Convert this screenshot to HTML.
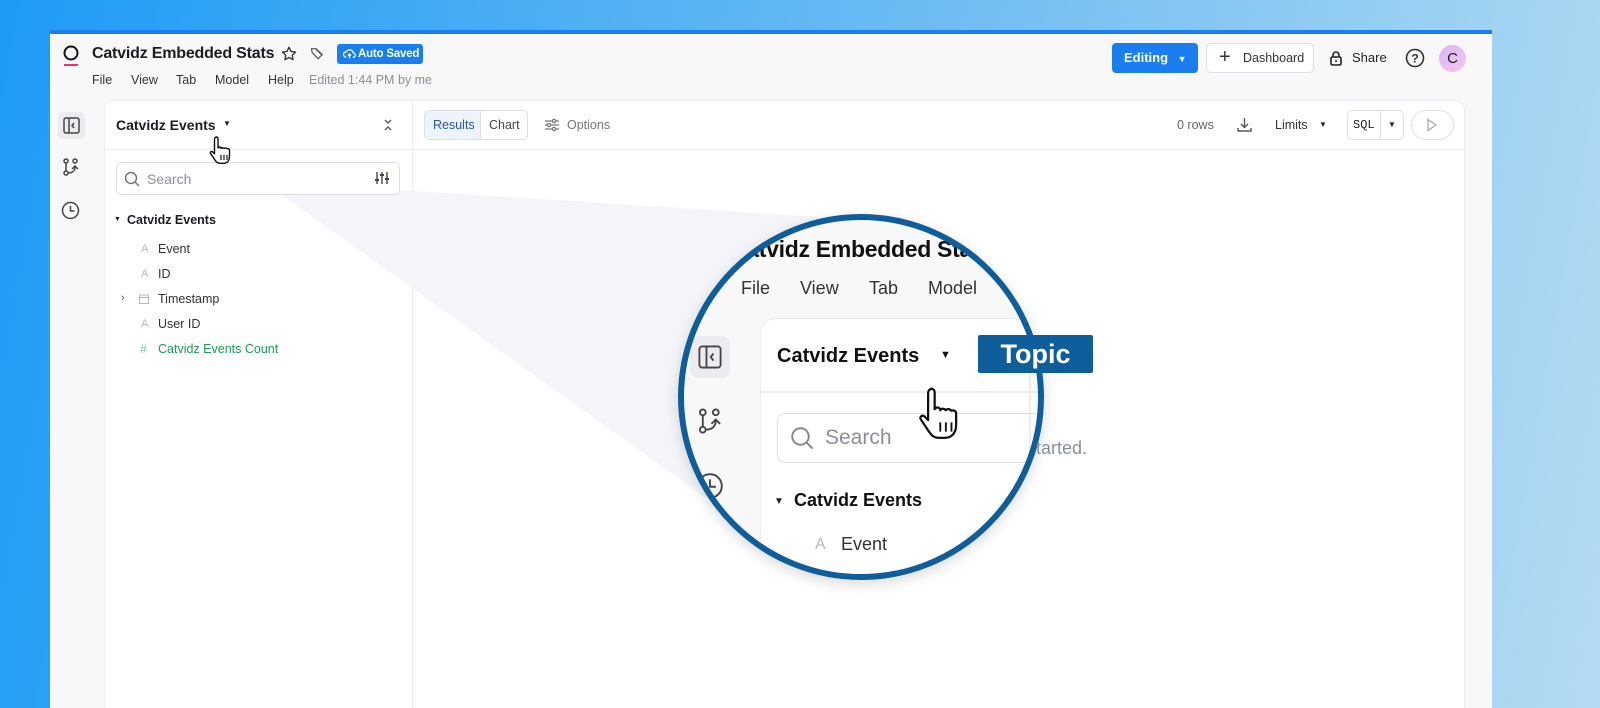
<!DOCTYPE html>
<html><head><meta charset="utf-8"><style>
*{box-sizing:border-box;margin:0;padding:0}
html,body{width:1600px;height:708px;overflow:hidden}
body{position:relative;font-family:"Liberation Sans",sans-serif;background:linear-gradient(100deg,#1d9bf5 0%,#5fb6f3 45%,#b4dbf2 100%);}
#wrap{position:absolute;left:0;top:0;width:1600px;height:708px;overflow:hidden;background:linear-gradient(100deg,#1d9bf5 0%,#5fb6f3 45%,#b4dbf2 100%)}
.abs{position:absolute}
.win{left:50px;top:30px;width:1442px;height:678px;background:#f8f8f9;border-top:4px solid #1a7ef0;}
.t{position:absolute;white-space:nowrap}
.panel{left:104px;top:100px;width:1361px;height:620px;background:#fff;border:1px solid #ececf0;border-radius:10px;}
.btn{position:absolute;border:1px solid #dcdfe5;border-radius:5px;background:#fff}
</style></head><body><div id="wrap">
<div class="abs win"></div>
<!-- header -->
<svg class="abs" style="left:62px;top:44px" width="20" height="24"><circle cx="9" cy="9" r="6.5" fill="none" stroke="#111" stroke-width="2"/><rect x="2" y="20" width="14" height="2" fill="#e8336b"/></svg>
<div class="t" style="left:92px;top:45px;font-size:16px;font-weight:bold;color:#1b1d22;letter-spacing:-0.2px">Catvidz Embedded Stats</div>
<svg class="abs" style="left:280px;top:45px" width="18" height="18" viewBox="0 0 24 24"><path d="M12 3l2.7 5.6 6.1.8-4.5 4.2 1.1 6L12 16.7 6.6 19.6l1.1-6L3.2 9.4l6.1-.8z" fill="none" stroke="#333" stroke-width="1.8" stroke-linejoin="round"/></svg>
<svg class="abs" style="left:309px;top:46px" width="17" height="16" viewBox="0 0 24 24"><path d="M3 4h7l9 9-6 6-9-9z M9 4l9 9" fill="none" stroke="#555" stroke-width="1.8"/></svg>
<div class="abs" style="left:337px;top:44px;width:86px;height:20px;background:#1a7ef0;border-radius:3px;color:#fff;font-size:11.5px;font-weight:bold;line-height:20px;padding-left:21px;white-space:nowrap;letter-spacing:-0.2px">Auto Saved</div>
<svg class="abs" style="left:343px;top:48px" width="13" height="12" viewBox="0 0 24 22"><path d="M6 17a5 5 0 010-10 7 7 0 0113 2 4 4 0 01-1 8M12 19v-8m-3 3l3-3 3 3" fill="none" stroke="#fff" stroke-width="2.4"/></svg>
<div class="t" style="left:92px;top:73px;font-size:12.5px;color:#333">File</div>
<div class="t" style="left:131px;top:73px;font-size:12.5px;color:#333">View</div>
<div class="t" style="left:176px;top:73px;font-size:12.5px;color:#333">Tab</div>
<div class="t" style="left:215px;top:73px;font-size:12.5px;color:#333">Model</div>
<div class="t" style="left:268px;top:73px;font-size:12.5px;color:#333">Help</div>
<div class="t" style="left:309px;top:73px;font-size:12.5px;color:#8a8f98">Edited 1:44 PM by me</div>

<div class="abs" style="left:1112px;top:43px;width:86px;height:30px;background:#1a7ef0;border-radius:4px;color:#fff;font-size:13px;font-weight:bold;line-height:30px;padding-left:12px;white-space:nowrap">Editing <span style="font-size:9px;margin-left:6px">▼</span></div>
<div class="btn" style="left:1206px;top:43px;width:108px;height:30px;font-size:12.5px;color:#333;line-height:28px;padding-left:36px">Dashboard</div>
<div class="t" style="left:1219px;top:46px;font-size:20px;color:#333;font-weight:300">+</div>
<svg class="abs" style="left:1329px;top:50px" width="14" height="16" viewBox="0 0 14 16"><rect x="2" y="7" width="10" height="8" rx="1.5" fill="none" stroke="#222" stroke-width="1.6"/><path d="M4 7V5a3 3 0 016 0v2" fill="none" stroke="#222" stroke-width="1.6"/><circle cx="7" cy="11" r="1" fill="#222"/></svg>
<div class="t" style="left:1352px;top:50px;font-size:13px;color:#222">Share</div>
<svg class="abs" style="left:1405px;top:48px" width="20" height="20"><circle cx="10" cy="10" r="8.5" fill="none" stroke="#333" stroke-width="1.6"/><text x="10" y="14.5" font-size="12" font-weight="bold" text-anchor="middle" fill="#333" font-family="Liberation Sans">?</text></svg>
<div class="abs" style="left:1439px;top:45px;width:27px;height:27px;border-radius:50%;background:linear-gradient(135deg,#d9b6f5,#f5c8ea);font-size:15px;line-height:27px;text-align:center;color:#222">C</div>

<!-- left rail -->
<div class="abs" style="left:58px;top:112px;width:27px;height:27px;background:#ececf0;border-radius:5px"></div>
<svg class="abs" style="left:63px;top:117px" width="17" height="17" viewBox="0 0 17 17"><rect x="1" y="1" width="15" height="15" rx="2" fill="none" stroke="#444" stroke-width="1.5"/><path d="M6 1v15M11 6l-2 2.5 2 2.5" fill="none" stroke="#444" stroke-width="1.5"/></svg>
<svg class="abs" style="left:62px;top:158px" width="18" height="18" viewBox="0 0 18 18" fill="none" stroke="#444" stroke-width="1.5"><circle cx="4" cy="3" r="2"/><circle cx="13" cy="3" r="2"/><circle cx="4" cy="15" r="2"/><path d="M4 5v8M6 15c4 0 7-2 7-6M10 11l3-3 3 3"/></svg>
<svg class="abs" style="left:61px;top:201px" width="19" height="19" viewBox="0 0 19 19" fill="none" stroke="#444" stroke-width="1.5"><circle cx="9.5" cy="9.5" r="8"/><path d="M9.5 5v5h4"/></svg>

<div class="abs panel"></div>
<div class="abs" style="left:412px;top:101px;width:1px;height:607px;background:#ececf0"></div>
<div class="abs" style="left:105px;top:149px;width:1359px;height:1px;background:#ececf0"></div>

<!-- cone -->
<svg class="abs" style="left:0;top:0" width="1600" height="708"><polygon points="265,183 400,190 836,218 706,498" fill="#f4f5f8"/></svg>

<!-- sidebar -->
<div class="t" style="left:116px;top:117px;font-size:14px;font-weight:bold;color:#1b1d22">Catvidz Events</div>
<div class="t" style="left:223px;top:119px;font-size:8px;color:#222">▼</div>
<svg class="abs" style="left:383px;top:118px" width="10" height="14" fill="none" stroke="#555" stroke-width="1.3"><path d="M2 2l3 3 3-3M2 12l3-3 3 3"/></svg>
<div class="abs" style="left:116px;top:162px;width:284px;height:33px;border:1px solid #dcdfe5;border-radius:5px;background:#fff"></div>
<svg class="abs" style="left:124px;top:171px" width="16" height="16" viewBox="0 0 16 16" fill="none" stroke="#777" stroke-width="1.5"><circle cx="7" cy="7" r="5.5"/><path d="M11 11l4 4"/></svg>
<div class="t" style="left:147px;top:171px;font-size:14px;color:#8a8f98">Search</div>
<svg class="abs" style="left:375px;top:171px" width="14" height="14" viewBox="0 0 14 14" stroke="#444" stroke-width="1.4"><path d="M2 1v12M7 1v12M12 1v12"/><path d="M0 9h4M5 4h4M10 8h4" stroke-width="2"/></svg>
<div class="t" style="left:114px;top:216px;font-size:7px;color:#222">▼</div>
<div class="t" style="left:127px;top:213px;font-size:12.5px;font-weight:bold;color:#1b1d22">Catvidz Events</div>
<div class="t" style="left:141px;top:243px;font-size:11px;color:#b5b8be">A</div><div class="t" style="left:158px;top:242px;font-size:12.5px;color:#333">Event</div>
<div class="t" style="left:141px;top:268px;font-size:11px;color:#b5b8be">A</div><div class="t" style="left:158px;top:267px;font-size:12.5px;color:#333">ID</div>
<div class="t" style="left:121px;top:292px;font-size:11px;color:#555">›</div>
<svg class="abs" style="left:139px;top:294px" width="10" height="10"><rect x="0.5" y="1" width="9" height="8.5" fill="none" stroke="#b5b8be"/><path d="M0 3.5h10" stroke="#b5b8be"/></svg>
<div class="t" style="left:158px;top:292px;font-size:12.5px;color:#333">Timestamp</div>
<div class="t" style="left:141px;top:318px;font-size:11px;color:#b5b8be">A</div><div class="t" style="left:158px;top:317px;font-size:12.5px;color:#333">User ID</div>
<div class="t" style="left:140px;top:342px;font-size:12px;color:#7dc29a">#</div><div class="t" style="left:158px;top:342px;font-size:12.5px;color:#1e9a52">Catvidz Events Count</div>
<!-- small hand cursor -->
<svg class="abs" style="left:209px;top:135px" width="28" height="30" viewBox="0 0 28 30"><path d="M7 2c1.5 0 2 1 2 2v9l1-1c1 0 2 .5 2 1.5 .5-1 2-1 3 0 .5-.8 2-.8 3 .3 1-.5 2.5 0 2.5 1.5v6c0 4-2 7-6 7h-3c-3 0-4-1-6-4l-4-6c-.5-1 .5-2.5 2-1.5l2 2V4c0-1 1-2 2-2z" fill="#fff" stroke="#111" stroke-width="1.4" stroke-linejoin="round"/><path d="M12 20v5M15 20v5M18 20v5" stroke="#111" stroke-width="1.2"/></svg>

<!-- toolbar -->
<div class="btn" style="left:424px;top:110px;width:104px;height:30px"></div>
<div class="abs" style="left:425px;top:111px;width:56px;height:28px;background:#eef4fd;border-right:1px solid #dcdfe5;border-radius:4px 0 0 4px"></div>
<div class="t" style="left:433px;top:118px;font-size:12.5px;color:#2456b8">Results</div>
<div class="t" style="left:489px;top:118px;font-size:12.5px;color:#444">Chart</div>
<svg class="abs" style="left:545px;top:118px" width="14" height="14" viewBox="0 0 14 14" stroke="#777" stroke-width="1.3" fill="#fff"><path d="M0 3h14M0 7h14M0 11h14"/><circle cx="9" cy="3" r="1.6"/><circle cx="4" cy="7" r="1.6"/><circle cx="9" cy="11" r="1.6"/></svg>
<div class="t" style="left:567px;top:118px;font-size:12.5px;color:#777">Options</div>
<div class="t" style="left:1177px;top:118px;font-size:12.5px;color:#666">0 rows</div>
<svg class="abs" style="left:1237px;top:117px" width="15" height="15" viewBox="0 0 15 15" fill="none" stroke="#555" stroke-width="1.4"><path d="M7.5 1v9M4 7l3.5 3.5L11 7M1 11v3h13v-3"/></svg>
<div class="t" style="left:1275px;top:118px;font-size:12.5px;color:#333">Limits</div>
<div class="t" style="left:1319px;top:120px;font-size:8px;color:#222">▼</div>
<div class="btn" style="left:1347px;top:110px;width:57px;height:30px"></div>
<div class="abs" style="left:1380px;top:111px;width:1px;height:28px;background:#dcdfe5"></div>
<div class="t" style="left:1353px;top:118px;font-size:12px;color:#222;font-family:'Liberation Mono',monospace">SQL</div>
<div class="t" style="left:1388px;top:120px;font-size:8px;color:#222">▼</div>
<div class="abs" style="left:1411px;top:110px;width:43px;height:30px;border:1px solid #dcdfe5;border-radius:15px"></div>
<svg class="abs" style="left:1426px;top:118px" width="12" height="14"><path d="M2 1.5l8 5.5-8 5.5z" fill="none" stroke="#aaa" stroke-width="1.3"/></svg>

<!-- magnifier -->
<div class="abs" style="left:678px;top:214px;width:366px;height:366px;border-radius:50%;overflow:hidden;background:#f8f8f9;box-shadow:0 4px 14px rgba(0,0,0,.15)">
  <div style="position:absolute;left:0;top:0;width:366px;height:366px;transform:translate(-678px,-214px)">
    <div class="t" style="left:730px;top:236px;font-size:23px;font-weight:bold;color:#111;letter-spacing:-0.3px">Catvidz Embedded Stats</div>
    <div class="t" style="left:741px;top:278px;font-size:18px;color:#333">File</div>
    <div class="t" style="left:800px;top:278px;font-size:18px;color:#333">View</div>
    <div class="t" style="left:869px;top:278px;font-size:18px;color:#333">Tab</div>
    <div class="t" style="left:928px;top:278px;font-size:18px;color:#333">Model</div>
    <div class="abs" style="left:690px;top:336px;width:40px;height:42px;background:#ececf0;border-radius:8px"></div>
    <svg class="abs" style="left:698px;top:345px" width="24" height="24" viewBox="0 0 17 17"><rect x="1" y="1" width="15" height="15" rx="2" fill="none" stroke="#444" stroke-width="1.3"/><path d="M6 1v15M11 6l-2 2.5 2 2.5" fill="none" stroke="#444" stroke-width="1.3"/></svg>
    <svg class="abs" style="left:697px;top:408px" width="26" height="26" viewBox="0 0 18 18" fill="none" stroke="#444" stroke-width="1.3"><circle cx="4" cy="3" r="2"/><circle cx="13" cy="3" r="2"/><circle cx="4" cy="15" r="2"/><path d="M4 5v8M6 15c4 0 7-2 7-6M10 11l3-3 3 3"/></svg>
    <svg class="abs" style="left:696px;top:472px" width="28" height="28" viewBox="0 0 19 19" fill="none" stroke="#444" stroke-width="1.3"><circle cx="9.5" cy="9.5" r="8"/><path d="M9.5 5v5h4"/></svg>
    <div class="abs" style="left:760px;top:318px;width:400px;height:300px;background:#fff;border:1px solid #ececf0;border-radius:16px"></div>
    <div class="abs" style="left:761px;top:391px;width:400px;height:2px;background:#ececf0"></div>
    <div class="abs" style="left:1029px;top:319px;width:2px;height:300px;background:#ececf0"></div>
    <div class="t" style="left:777px;top:345px;font-size:20px;font-weight:bold;color:#111">Catvidz Events</div>
    <div class="t" style="left:940px;top:349px;font-size:11px;color:#111">▼</div>
    <div class="abs" style="left:777px;top:413px;width:280px;height:50px;border:1.5px solid #dcdfe5;border-radius:8px"></div>
    <svg class="abs" style="left:790px;top:426px" width="24" height="24" viewBox="0 0 16 16" fill="none" stroke="#888" stroke-width="1.3"><circle cx="7" cy="7" r="5.5"/><path d="M11 11l4 4"/></svg>
    <div class="t" style="left:825px;top:426px;font-size:21px;color:#8a8f98">Search</div>
    <div class="t" style="left:774px;top:496px;font-size:10px;color:#222">▼</div>
    <div class="t" style="left:794px;top:490px;font-size:18px;font-weight:bold;color:#111">Catvidz Events</div>
    <div class="t" style="left:815px;top:536px;font-size:16px;color:#b5b8be">A</div>
    <div class="t" style="left:841px;top:534px;font-size:18px;color:#333">Event</div>
  </div>
</div>
<div class="abs" style="left:678px;top:214px;width:366px;height:366px;border-radius:50%;border:6px solid #0e5e9c"></div>
<div class="t" style="left:1036px;top:438px;font-size:18px;color:#8a8f98">tarted.</div>
<div class="abs" style="left:978px;top:335px;width:115px;height:38px;background:#0e5e9c;border-radius:2px;color:#fff;font-size:27px;font-weight:bold;line-height:38px;text-align:center">Topic</div>
<svg class="abs" style="left:916px;top:385px" width="56" height="56" viewBox="0 0 28 30"><path d="M7 2c1.5 0 2 1 2 2v9l1-1c1 0 2 .5 2 1.5 .5-1 2-1 3 0 .5-.8 2-.8 3 .3 1-.5 2.5 0 2.5 1.5v6c0 4-2 7-6 7h-3c-3 0-4-1-6-4l-4-6c-.5-1 .5-2.5 2-1.5l2 2V4c0-1 1-2 2-2z" fill="#fff" stroke="#111" stroke-width="1.2" stroke-linejoin="round"/><path d="M12 20v5M15 20v5M18 20v5" stroke="#111" stroke-width="1"/></svg>
</div></body></html>
